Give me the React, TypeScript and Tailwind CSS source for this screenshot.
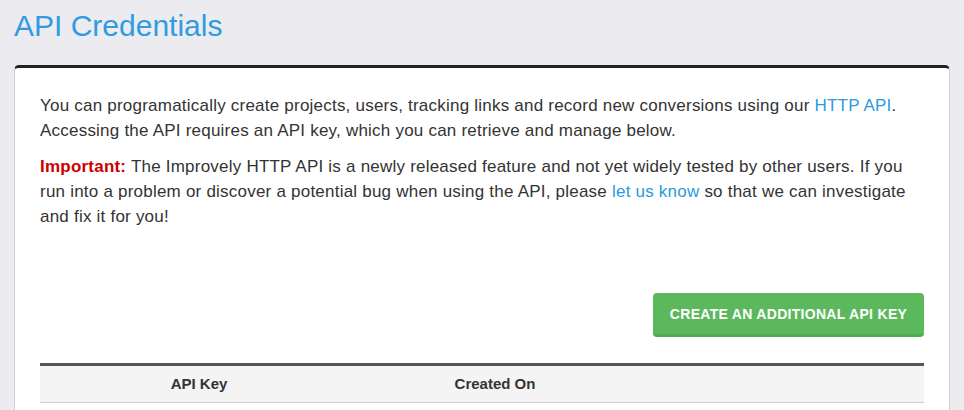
export default function App() {
  return (
    <div
      className="h-[410px] overflow-hidden w-full bg-[#ececf0] px-[14px] pt-[9px]"
      style={{ fontFamily: '"Liberation Sans", Arial, sans-serif' }}
    >
      <h1 className="text-[30px] leading-[33px] text-[#2f9be0] font-normal">API Credentials</h1>
      <div className="mt-[23px] rounded-t-[5px] border-t-[3px] border-t-[#222] border-x border-x-[#cfcfd4] bg-white px-[25px] pt-[25px] pb-[40px]">
        <p className="text-[17px] leading-[25px] tracking-[0.22px] text-[#333]">
          You can programatically create projects, users, tracking links and record new conversions using our{" "}
          <a className="text-[#2b9ae0]">HTTP API</a>. Accessing the API requires an API key, which you can retrieve and manage below.
        </p>
        <p className="mt-[11px] text-[17px] leading-[25px] tracking-[0.22px] text-[#333]">
          <strong className="font-bold text-[#cc0000]">Important:</strong> The Improvely HTTP API is a newly released feature and not yet widely tested by other users. If you run into a problem or discover a potential bug when using the API, please{" "}
          <a className="text-[#2b9ae0]">let us know</a> so that we can investigate and fix it for you!
        </p>
        <div className="mt-[64px] flex justify-end">
          <button className="h-[44px] w-[271px] rounded-[4px] border-b-[3px] border-b-[#4cae4c] bg-[#5cb85c] pt-[2px] text-[14px] font-bold tracking-[0.3px] text-white">
            CREATE AN ADDITIONAL API KEY
          </button>
        </div>
        <div className="mt-[26px] border-t-[3px] border-t-[#555] border-b border-b-[#cccccc] bg-[#f4f4f4]">
          <div className="flex h-[36px] items-center text-[15px] font-bold text-[#333]">
            <div className="w-[318px] text-center">API Key</div>
            <div className="w-[274px] text-center">Created On</div>
            <div className="flex-1"></div>
          </div>
        </div>
      </div>
    </div>
  );
}
